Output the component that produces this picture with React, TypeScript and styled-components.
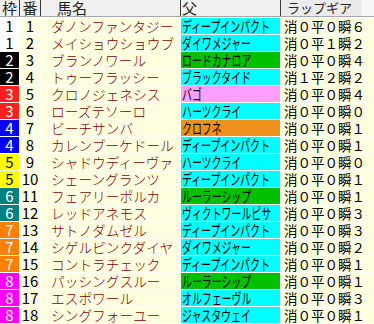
import styled, { createGlobalStyle } from 'styled-components';

const GlobalStyle = createGlobalStyle`
  html, body {
    margin: 0;
    padding: 0;
    background: #ffffff;
  }
  body {
    font-family: "Noto Sans CJK JP", "Noto Sans", sans-serif;
  }
`;

const WAKU_COLORS: Record<number, { bg: string; fg: string }> = {
  1: { bg: '#ffffff', fg: '#000000' },
  2: { bg: '#000000', fg: '#ffffff' },
  3: { bg: '#ff2020', fg: '#ffffff' },
  4: { bg: '#0000ff', fg: '#ffffff' },
  5: { bg: '#ffff00', fg: '#000000' },
  6: { bg: '#008080', fg: '#ffffff' },
  7: { bg: '#ff8000', fg: '#ffffff' },
  8: { bg: '#ff00ff', fg: '#ffffff' },
};

const SIRE_COLORS: Record<string, string> = {
  cyan: '#00ffff',
  green: '#00c000',
  pink: '#ffa0ff',
  orange: '#f0901c',
};

type Horse = {
  waku: number;
  no: number;
  name: string;
  sire: string;
  sireTone: keyof typeof SIRE_COLORS;
  gear: string;
};

const horses: Horse[] = [
  { waku: 1, no: 1, name: 'ダノンファンタジー', sire: 'ディープインパクト', sireTone: 'cyan', gear: '消０平０瞬６' },
  { waku: 1, no: 2, name: 'メイショウショウブ', sire: 'ダイワメジャー', sireTone: 'cyan', gear: '消０平１瞬２' },
  { waku: 2, no: 3, name: 'ブランノワール', sire: 'ロードカナロア', sireTone: 'green', gear: '消０平０瞬４' },
  { waku: 2, no: 4, name: 'トゥーフラッシー', sire: 'ブラックタイド', sireTone: 'cyan', gear: '消１平２瞬２' },
  { waku: 3, no: 5, name: 'クロノジェネシス', sire: 'バゴ', sireTone: 'pink', gear: '消０平０瞬４' },
  { waku: 3, no: 6, name: 'ローズテソーロ', sire: 'ハーツクライ', sireTone: 'cyan', gear: '消０平０瞬０' },
  { waku: 4, no: 7, name: 'ビーチサンバ', sire: 'クロフネ', sireTone: 'orange', gear: '消０平０瞬１' },
  { waku: 4, no: 8, name: 'カレンブーケドール', sire: 'ディープインパクト', sireTone: 'cyan', gear: '消０平０瞬１' },
  { waku: 5, no: 9, name: 'シャドウディーヴァ', sire: 'ハーツクライ', sireTone: 'cyan', gear: '消０平０瞬０' },
  { waku: 5, no: 10, name: 'シェーングランツ', sire: 'ディープインパクト', sireTone: 'cyan', gear: '消０平０瞬１' },
  { waku: 6, no: 11, name: 'フェアリーポルカ', sire: 'ルーラーシップ', sireTone: 'green', gear: '消０平０瞬１' },
  { waku: 6, no: 12, name: 'レッドアネモス', sire: 'ヴィクトワールピサ', sireTone: 'cyan', gear: '消０平０瞬３' },
  { waku: 7, no: 13, name: 'サトノダムゼル', sire: 'ディープインパクト', sireTone: 'cyan', gear: '消０平０瞬３' },
  { waku: 7, no: 14, name: 'シゲルピンクダイヤ', sire: 'ダイワメジャー', sireTone: 'cyan', gear: '消０平０瞬２' },
  { waku: 7, no: 15, name: 'コントラチェック', sire: 'ディープインパクト', sireTone: 'cyan', gear: '消０平０瞬１' },
  { waku: 8, no: 16, name: 'パッシングスルー', sire: 'ルーラーシップ', sireTone: 'green', gear: '消０平０瞬１' },
  { waku: 8, no: 17, name: 'エスポワール', sire: 'オルフェーヴル', sireTone: 'cyan', gear: '消０平０瞬３' },
  { waku: 8, no: 18, name: 'シングフォーユー', sire: 'ジャスタウェイ', sireTone: 'cyan', gear: '消０平０瞬１' },
];

export default function App() {
  return (
    <>
      <GlobalStyle />
      <Table>
        <HeaderRow>
          <HeadCell $align="center">枠</HeadCell>
          <HeadCell $align="center">番</HeadCell>
          <HeadCell $pad={16}>馬名</HeadCell>
          <HeadCell $pad={1}>父</HeadCell>
          <GearHead>ラップギア</GearHead>
        </HeaderRow>
        {horses.map((h) => (
          <Row key={h.no}>
            <WakuCell $bg={WAKU_COLORS[h.waku].bg} $fg={WAKU_COLORS[h.waku].fg}>
              {h.waku}
            </WakuCell>
            <NumCell>{h.no}</NumCell>
            <NameCell>{h.name}</NameCell>
            <SireCell $bg={SIRE_COLORS[h.sireTone]}>
              <Narrow>{h.sire}</Narrow>
            </SireCell>
            <GearCell>{h.gear}</GearCell>
          </Row>
        ))}
      </Table>
    </>
  );
}

const columns = '19px 20px 139px 99px 93px';

const Table = styled.div`
  width: 374px;
  height: 324px;
  display: flex;
  flex-direction: column;
  gap: 1px;
  background: #ffffff;
  overflow: hidden;
`;

const HeaderRow = styled.div`
  display: grid;
  grid-template-columns: ${columns};
  column-gap: 1px;
  height: 16px;
  background: #3a3a3a;
  border-bottom: 1px solid #a8a8a8;
`;

const HeadCell = styled.div<{ $align?: string; $pad?: number }>`
  background: #f0f0f0;
  color: #222222;
  font-size: 15px;
  line-height: 16px;
  text-align: ${(p) => p.$align || 'left'};
  padding-left: ${(p) => p.$pad || 0}px;
  white-space: nowrap;
`;

const GearHead = styled.div`
  background: linear-gradient(to right, #ebebeb 0, #ebebeb 81px, #f7f7f7 81px);
  color: #222222;
  font-size: 13px;
  line-height: 16px;
  padding-left: 6px;
  white-space: nowrap;
`;

const Row = styled.div`
  display: grid;
  grid-template-columns: ${columns};
  column-gap: 1px;
  height: 16px;
`;

const BaseCell = styled.div`
  font-size: 15px;
  line-height: 16px;
  white-space: nowrap;
`;

const WakuCell = styled(BaseCell)<{ $bg: string; $fg: string }>`
  background: ${(p) => p.$bg};
  color: ${(p) => p.$fg};
  text-align: center;
`;

const NumCell = styled(BaseCell)`
  background: #ffffe0;
  color: #000000;
  text-align: center;
`;

const NameCell = styled(BaseCell)`
  background: #ffffe0;
  color: #800000;
  font-size: 13.7px;
  font-weight: 300;
  padding-left: 10px;
`;

const SireCell = styled(BaseCell)<{ $bg: string }>`
  background: ${(p) => p.$bg};
  color: #000000;
  padding-left: 1px;
  overflow: hidden;
`;

const Narrow = styled.span`
  display: inline-block;
  transform: scaleX(0.66);
  transform-origin: left center;
`;

const GearCell = styled(BaseCell)`
  background: #ffffe0;
  color: #000000;
  font-size: 13.5px;
  padding-left: 3px;
`;
